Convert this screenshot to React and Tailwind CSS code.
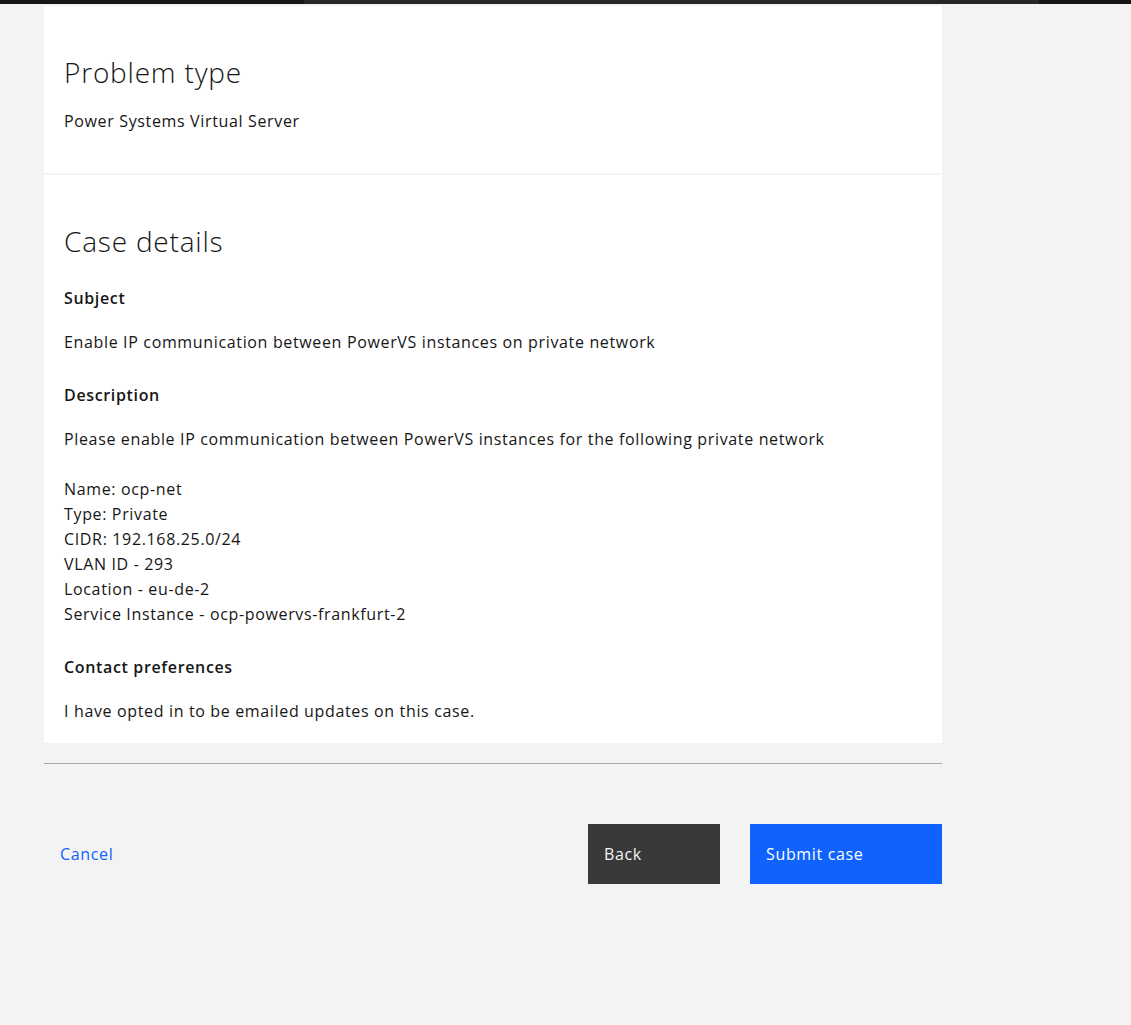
export default function App() {
  const descLines = [
    'Please enable IP communication between PowerVS instances for the following private network',
    '',
    'Name: ocp-net',
    'Type: Private',
    'CIDR: 192.168.25.0/24',
    'VLAN ID - 293',
    'Location - eu-de-2',
    'Service Instance - ocp-powervs-frankfurt-2',
  ];

  return (
    <div className="min-h-[1025px] bg-[#f3f3f3] text-[#161616] font-['Open_Sans',sans-serif] tracking-[0.65px]">
      {/* top progress strip */}
      <div className="flex h-[4px]">
        <div className="w-[304px] bg-[#161616]" />
        <div className="flex-1 bg-[#262626]" />
        <div className="w-[92px] bg-[#161616]" />
      </div>

      <div className="w-[898px] ml-[44px] pt-[2px]">
        {/* Problem type */}
        <section className="bg-white px-5 pt-[48px] pb-[40px]">
          <h2 className="text-[28px] leading-[36px] font-light tracking-[0.8px]">Problem type</h2>
          <p className="mt-[19px] text-base leading-6">Power Systems Virtual Server</p>
        </section>

        {/* Case details */}
        <section className="bg-white px-5 pt-[48px] pb-[20px] mt-[2px]">
          <h2 className="text-[28px] leading-[36px] font-light tracking-[0.8px]">Case details</h2>

          <h3 className="mt-[27px] text-base leading-6 font-semibold">Subject</h3>
          <p className="mt-[20px] text-base leading-6">
            Enable IP communication between PowerVS instances on private network
          </p>

          <h3 className="mt-[29px] text-base leading-6 font-semibold">Description</h3>
          <div className="mt-[20px] text-base leading-[25px]">
            {descLines.map((l, i) => (
              <p key={i} className="h-[25px]">{l}</p>
            ))}
          </div>

          <h3 className="mt-[28px] text-base leading-6 font-semibold">Contact preferences</h3>
          <p className="mt-[20px] text-base leading-6">
            I have opted in to be emailed updates on this case.
          </p>
        </section>

        <div className="mt-[20px] h-px bg-[#a8a8a8]" />

        {/* actions */}
        <div className="mt-[60px] flex items-center">
          <button className="ml-4 text-base text-[#0f62fe]">Cancel</button>
          <div className="ml-auto flex gap-[30px]">
            <button className="w-[132px] h-[60px] bg-[#393939] text-[#f4f4f4] text-base text-left pl-4">
              Back
            </button>
            <button className="w-[192px] h-[60px] bg-[#0f62fe] text-white text-base text-left pl-4">
              Submit case
            </button>
          </div>
        </div>
      </div>
    </div>
  );
}
